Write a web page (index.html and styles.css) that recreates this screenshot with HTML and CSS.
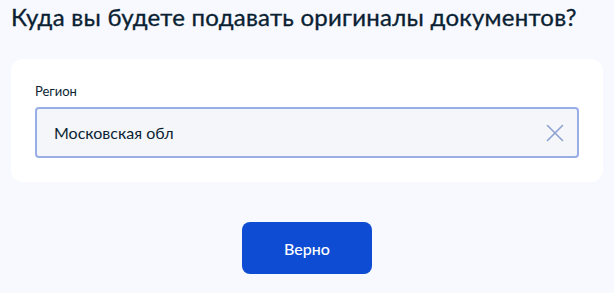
FILE: index.html
```html
<!DOCTYPE html>
<html lang="ru">
<head>
<meta charset="utf-8">
<title>Регион</title>
<link rel="stylesheet" href="styles.css">
</head>
<body>
<main class="page">
  <h1 class="title">Куда вы будете подавать оригиналы документов?</h1>
  <section class="card">
    <label class="label" for="region">Регион</label>
    <div class="field">
      <span class="value" id="region">Московская обл</span>
      <svg class="clear" width="18" height="18" viewBox="0 0 18 18" aria-hidden="true">
        <path d="M1.5 1.5 L16.5 16.5 M16.5 1.5 L1.5 16.5" stroke="#8fa1d2" stroke-width="1.6" fill="none" stroke-linecap="round"/>
      </svg>
    </div>
  </section>
  <div class="actions">
    <button class="btn" type="button">Верно</button>
  </div>
</main>
</body>
</html>
```

FILE: styles.css
```css
html, body {
  margin: 0;
  padding: 0;
  background: #f7f9fe;
}
body {
  font-family: Lato, "Noto Sans", sans-serif;
  color: #0b1f33;
}
.page {
  padding: 3px 11px 0 11px;
}
.title {
  margin: 0 0 28px 0;
  font-size: 24px;
  line-height: 28px;
  font-weight: 400;
  letter-spacing: 0.25px;
  -webkit-text-stroke: 0.35px #0b1f33;
  color: #0b1f33;
  white-space: nowrap;
}
.card {
  background: #ffffff;
  border-radius: 12px;
  padding: 24px 24px 24px 24px;
  display: flex;
  flex-direction: column;
}
.label {
  font-size: 13px;
  line-height: 16px;
  color: #0b1f33;
  margin-bottom: 8px;
}
.field {
  box-sizing: border-box;
  height: 51px;
  border: 2px solid #99ade6;
  border-radius: 4px;
  background: #f4f6fa;
  display: flex;
  align-items: center;
  justify-content: space-between;
  padding: 0 13px 0 17px;
}
.value {
  font-size: 16px;
  line-height: 20px;
  color: #0b1f33;
}
.clear {
  display: block;
}
.actions {
  display: flex;
  justify-content: center;
  padding-top: 40px;
}
.btn {
  width: 130px;
  height: 52px;
  border: 0;
  border-radius: 8px;
  background: #0d4cd3;
  color: #ffffff;
  font-family: Lato, "Noto Sans", sans-serif;
  font-size: 16px;
  font-weight: 500;
}
```
